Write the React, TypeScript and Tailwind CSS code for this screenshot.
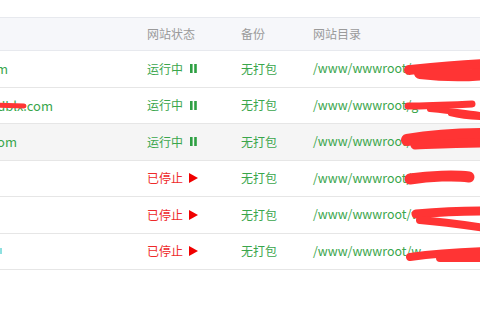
import React from 'react';

interface Site {
  name: string;
  nameEnd: string;
  tail: string;
  running: boolean;
  hover?: boolean;
}

const SITES: Site[] = [
  { name: 'example.com', nameEnd: 'w-[8px]', tail: 'e', running: true },
  { name: 'ab.dblx.com', nameEnd: 'w-[53px]', tail: 'g', running: true },
  { name: 'demo.com', nameEnd: 'w-[17px]', tail: 'd', running: true, hover: true },
  { name: '', nameEnd: 'w-[0px]', tail: 'l', running: false },
  { name: '', nameEnd: 'w-[0px]', tail: 'w', running: false },
  { name: '', nameEnd: 'w-[0px]', tail: 'w', running: false },
];

const font = "font-['Microsoft_YaHei','Noto_Sans_CJK_SC','Liberation_Sans',sans-serif]";

function StatusCell({ running }: { running: boolean }) {
  if (running) {
    return (
      <div className="flex items-center gap-[7px] text-[#3aa64c]">
        <span>运行中</span>
        <svg width="7" height="9" viewBox="0 0 7 9">
          <rect x="0" y="0" width="2.6" height="9" fill="#2ea043" />
          <rect x="4.2" y="0" width="2.6" height="9" fill="#2ea043" />
        </svg>
      </div>
    );
  }
  return (
    <div className="flex items-center gap-[6px] text-[#ee2a2a]">
      <span>已停止</span>
      <svg width="9" height="10" viewBox="0 0 9 10">
        <polygon points="0,0 9,5 0,10" fill="#f00000" />
      </svg>
    </div>
  );
}

export default function App() {
  return (
    <div className={`relative w-[480px] h-[320px] bg-white overflow-hidden text-[12px] ${font}`}>
      <div className="h-[17px]" />
      {/* header */}
      <div className="flex items-center h-[34px] bg-[#f6f7fa] border-t border-b border-[#e7e9ee] text-[#9a9a9a]">
        <div className="w-[147px]" />
        <div className="w-[94px]">网站状态</div>
        <div className="w-[72px]">备份</div>
        <div>网站目录</div>
      </div>
      {/* rows */}
      {SITES.map((s, i) => (
        <div
          key={i}
          className={`flex items-center h-[36.5px] border-b border-[#e6e6e6] ${s.hover ? 'bg-[#f5f5f5]' : 'bg-white'}`}
        >
          <div className="w-[147px] whitespace-nowrap text-[13px] text-[#3aa64c]">
            <div className={`flex justify-end ${s.nameEnd}`}>
              <span>{s.name}</span>
            </div>
          </div>
          <div className="w-[94px]">
            <StatusCell running={s.running} />
          </div>
          <div className="w-[72px] text-[#3aa64c]">无打包</div>
          <div className="whitespace-nowrap text-[12.4px] text-[#3aa64c]">/www/wwwroot/{s.tail}</div>
        </div>
      ))}
      {/* tiny cyan mark, row 6 */}
      <div className="absolute left-0 top-[248px] w-[2px] h-[6px] bg-[#8ee0e0]" />
      {/* red scribbles hiding the names */}
      <svg className="absolute left-0 top-0" width="480" height="320" viewBox="0 0 480 320" fill="none" strokeLinecap="round" strokeLinejoin="round">
        <g stroke="#ff3434">
          <path d="M-4 105 L24 106" strokeWidth="5" />
          {/* row 1 */}
          <path d="M409 70 C430 68 450 66 485 64" strokeWidth="10" />
          <path d="M420 73 C445 76 465 76 485 74" strokeWidth="12" />
          {/* row 2 */}
          <path d="M408 106 C430 106 450 105 472 104" strokeWidth="7" />
          <path d="M430 109 C450 111 470 113 485 116" strokeWidth="6" />
          <path d="M450 114 C465 118 475 118 485 118" strokeWidth="4" />
          {/* row 3 */}
          <path d="M407 140 C430 136 455 134 485 134" strokeWidth="12" />
          <path d="M415 145 C440 144 460 143 485 143" strokeWidth="9" />
          {/* row 4 */}
          <path d="M410 179 C430 176 455 175 469 177" strokeWidth="11" />
          {/* row 5 */}
          <path d="M416 214 C440 212 460 211 485 211" strokeWidth="9" />
          <path d="M420 220 C445 222 465 225 485 228" strokeWidth="8" />
          {/* row 6 */}
          <path d="M410 257 C430 254 450 252 485 251" strokeWidth="8" />
          <path d="M440 258 C460 258 470 258 485 258" strokeWidth="8" />
        </g>
      </svg>
    </div>
  );
}
